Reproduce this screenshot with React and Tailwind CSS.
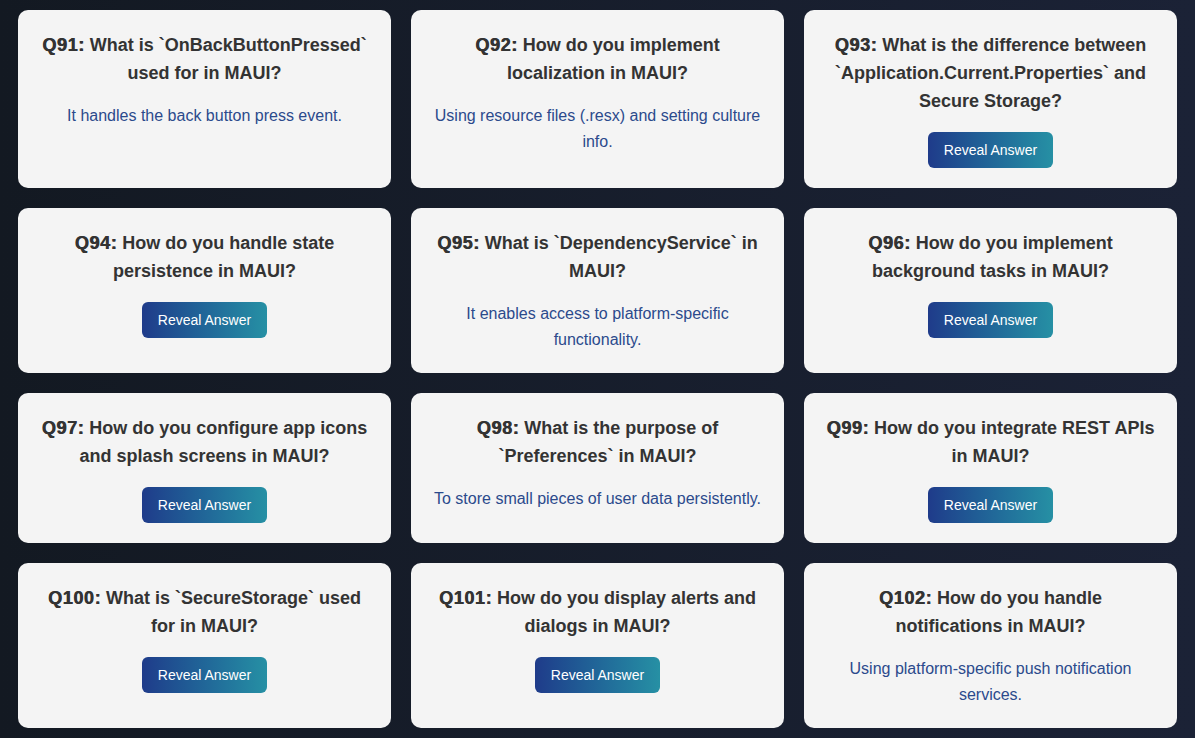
import React, { useState } from 'react';

const questions = [
  { id: 91, q: 'What is `OnBackButtonPressed` used for in MAUI?', a: 'It handles the back button press event.', open: true },
  { id: 92, q: 'How do you implement localization in MAUI?', a: 'Using resource files (.resx) and setting culture info.', open: true },
  { id: 93, q: 'What is the difference between `Application.Current.Properties` and Secure Storage?', a: 'Properties is not encrypted while SecureStorage encrypts data.', open: false },
  { id: 94, q: 'How do you handle state persistence in MAUI?', a: 'Using Preferences, SecureStorage or local databases.', open: false },
  { id: 95, q: 'What is `DependencyService` in MAUI?', a: 'It enables access to platform-specific functionality.', open: true },
  { id: 96, q: 'How do you implement background tasks in MAUI?', a: 'Using platform-specific background services.', open: false },
  { id: 97, q: 'How do you configure app icons and splash screens in MAUI?', a: 'Through the project file and Resources folder.', open: false },
  { id: 98, q: 'What is the purpose of `Preferences` in MAUI?', a: 'To store small pieces of user data persistently.', open: true },
  { id: 99, q: 'How do you integrate REST APIs in MAUI?', a: 'Using HttpClient to call the endpoints.', open: false },
  { id: 100, q: 'What is `SecureStorage` used for in MAUI?', a: 'To store sensitive data securely.', open: false },
  { id: 101, q: 'How do you display alerts and dialogs in MAUI?', a: 'Using DisplayAlert and DisplayActionSheet.', open: false },
  { id: 102, q: 'How do you handle notifications in MAUI?', a: 'Using platform-specific push notification services.', open: true },
];

const QuestionCard = ({ item }) => {
  const [open, setOpen] = useState(item.open);

  return (
    <div className="bg-[#f4f4f4] rounded-[10px] px-5 pt-[21px] pb-5 text-center">
      <h3 className="text-[18px] leading-[28px] font-bold text-[#333333]">
        <strong className="[text-shadow:0.6px_0_0_#333333] tracking-[0.6px]">Q{item.id}:</strong> {item.q}
      </h3>
      {open ? (
        <p className="mt-4 text-[16px] leading-[26px] text-[#2b4a8c]">{item.a}</p>
      ) : (
        <button
          onClick={() => setOpen(true)}
          className="mt-[17px] h-[36px] px-4 rounded-[6px] bg-gradient-to-r from-[#1f3b8a] to-[#2690a4] text-white text-[14px]"
        >
          Reveal Answer
        </button>
      )}
    </div>
  );
};

const App = () => {
  return (
    <div className="min-h-screen bg-gradient-to-r from-[#131922] to-[#1b2236] px-[18px] pt-[10px] pb-[12px] font-['Liberation_Sans',Arial,sans-serif]">
      <div className="grid grid-cols-3 gap-5">
        {questions.map((item) => (
          <QuestionCard key={item.id} item={item} />
        ))}
      </div>
    </div>
  );
};

export default App;
